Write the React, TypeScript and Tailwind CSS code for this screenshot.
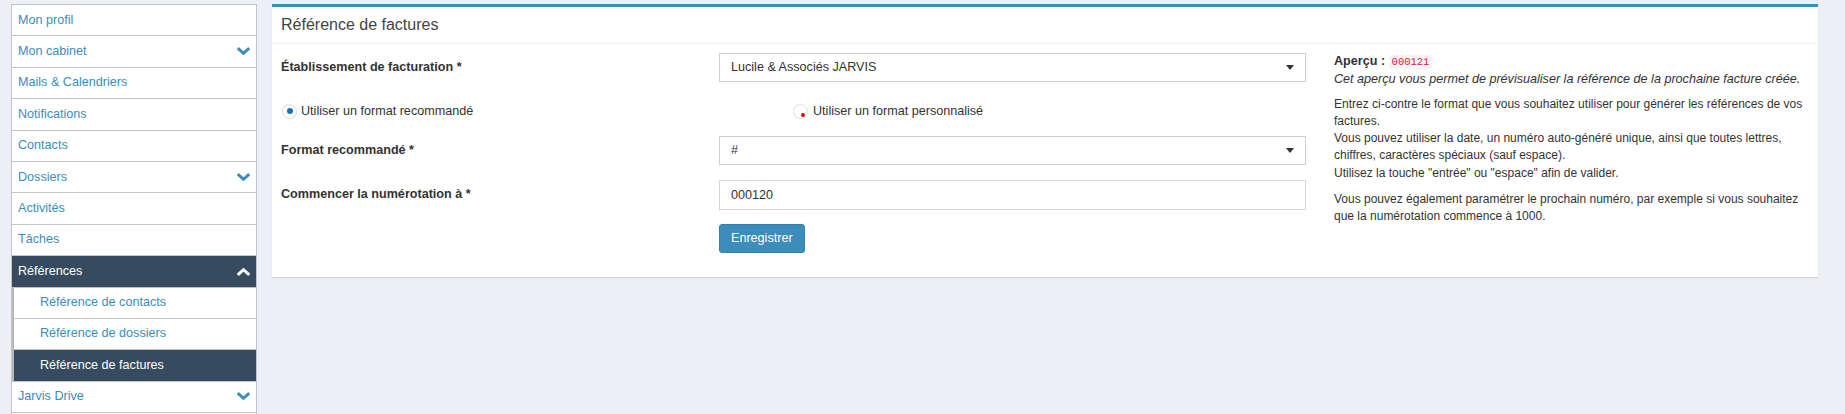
import { useState } from "react";

type NavItem = { label: string; chevron?: "down" | "up"; active?: boolean };

const topItems: NavItem[] = [
    { label: "Mon profil" },
    { label: "Mon cabinet", chevron: "down" },
    { label: "Mails & Calendriers" },
    { label: "Notifications" },
    { label: "Contacts" },
    { label: "Dossiers", chevron: "down" },
    { label: "Activités" },
    { label: "Tâches" },
];

const subItems = [
    { label: "Référence de contacts" },
    { label: "Référence de dossiers" },
    { label: "Référence de factures", active: true },
];

function Chevron({ dir, className }: { dir: "down" | "up"; className: string }) {
    return (
        <svg viewBox="0 0 14 9" className={className} fill="none" stroke="currentColor" strokeWidth="3.2" strokeLinecap="square">
            {dir === "down" ? <polyline points="2,2 7,6.5 12,2" /> : <polyline points="2,7 7,2.5 12,7" />}
        </svg>
    );
}

function Caret() {
    return (
        <svg viewBox="0 0 8 5" className="h-[5px] w-[8px] text-[#333]" fill="currentColor">
            <polygon points="0,0 8,0 4,5" />
        </svg>
    );
}

function Sidebar() {
    return (
        <aside className="w-[246px] shrink-0 self-start border-x border-t border-[#c3c3c3] bg-white">
            {topItems.map((item) => (
                <div key={item.label} className="flex h-[31.4px] items-center justify-between border-b border-[#c3c3c3] pl-[6px] pr-[6px] text-[#3c8dbc]">
                    <span>{item.label}</span>
                    {item.chevron && <Chevron dir={item.chevron} className="h-[9px] w-[13px]" />}
                </div>
            ))}
            <div className="flex h-[31.4px] items-center justify-between border-b border-[#c3c3c3] bg-[#364b60] pl-[6px] pr-[6px] text-white">
                <span>Références</span>
                <Chevron dir="up" className="h-[9px] w-[13px]" />
            </div>
            <div className="border-l-2 border-[#b8b8b8]">
                {subItems.map((item) => (
                    <div
                        key={item.label}
                        className={
                            item.active
                                ? "flex h-[31.4px] items-center border-b border-[#c3c3c3] bg-[#364b60] pl-[26px] text-white"
                                : "flex h-[31.4px] items-center border-b border-[#c3c3c3] pl-[26px] text-[#3c8dbc]"
                        }
                    >
                        {item.label}
                    </div>
                ))}
            </div>
            <div className="flex h-[31.4px] items-center justify-between border-b border-[#c3c3c3] pl-[6px] pr-[6px] text-[#3c8dbc]">
                <span>Jarvis Drive</span>
                <Chevron dir="down" className="h-[9px] w-[13px]" />
            </div>
            <div className="h-[31.4px] border-b border-[#c3c3c3]"></div>
        </aside>
    );
}

function FakeSelect({ value }: { value: string }) {
    return (
        <div className="flex h-[29px] w-[587px] items-center justify-between border border-[#cfcfcf] bg-white pl-[11px] pr-[11px] text-[#333]">
            <span>{value}</span>
            <Caret />
        </div>
    );
}

export default function App() {
    const [mode, setMode] = useState<"reco" | "perso">("reco");

    return (
        <div
            className="flex h-[414px] overflow-hidden gap-[15px] bg-[#ecf0f5] pl-[11px] pr-[27px] pt-[4px] text-[12.6px] leading-[17.3px] text-[#333]"
            style={{ fontFamily: '"Liberation Sans", Arial, sans-serif' }}
        >
            <Sidebar />

            <div className="flex-1 self-start border-t-[3px] border-[#3c8dbc] bg-white shadow-[0_1px_1px_rgba(0,0,0,0.12)]">
                <div className="flex h-[37px] items-center border-b border-[#f2f2f2] pl-[9px] text-[16px] text-[#444]">
                    Référence de factures
                </div>

                <div className="flex pb-[24px] pl-[9px] pr-[8px] pt-[9px]">
                    <div className="w-[1025px] shrink-0">
                        <div className="flex items-center">
                            <div className="w-[438px] font-bold">Établissement de facturation *</div>
                            <FakeSelect value="Lucile & Associés JARVIS" />
                        </div>

                        <div className="mt-[15px] flex h-[29px] items-center">
                            <button type="button" onClick={() => setMode("reco")} className="flex w-[512px] items-center pl-[1px]">
                                <span className="mr-[4px] flex h-[15px] w-[15px] items-center justify-center rounded-full border border-[#dcdcdc] bg-white">
                                    {mode === "reco" && <span className="h-[6px] w-[6px] rounded-full bg-[#1f6fb5]"></span>}
                                </span>
                                Utiliser un format recommandé
                            </button>
                            <button type="button" onClick={() => setMode("perso")} className="flex items-center">
                                <span className="relative mr-[5px] flex h-[15px] w-[15px] items-center justify-center rounded-full border border-[#e0e0e0] bg-white">
                                    <span className="absolute bottom-[1px] right-[2px] h-[4px] w-[4px] rounded-full bg-[#e00000]"></span>
                                </span>
                                Utiliser un format personnalisé
                            </button>
                        </div>

                        <div className="mt-[10px] flex items-center">
                            <div className="w-[438px] font-bold">Format recommandé *</div>
                            <FakeSelect value="#" />
                        </div>

                        <div className="mt-[15px] flex items-center">
                            <div className="w-[438px] font-bold">Commencer la numérotation à *</div>
                            <input
                                defaultValue="000120"
                                className="h-[30px] w-[587px] border border-[#d2d6de] bg-white pl-[11px] text-[#333] outline-none"
                            />
                        </div>

                        <div className="mt-[14px] pl-[438px]">
                            <button type="button" className="h-[29px] rounded-[3px] border border-[#367fa9] bg-[#3c8dbc] px-[11px] text-white">
                                Enregistrer
                            </button>
                        </div>
                    </div>

                    <div className="ml-[28px] flex-1 whitespace-nowrap">
                        <div className="mb-[7px]">
                            <div>
                                <span className="font-bold">Aperçu : </span>
                                <code
                                    className="rounded-[3px] bg-[#f9f2f4] px-[3px] py-[1px] text-[10.5px] text-[#c7254e]"
                                    style={{ fontFamily: '"Liberation Mono", "Courier New", monospace' }}
                                >
                                    000121
                                </code>
                            </div>
                            <div className="italic">Cet aperçu vous permet de prévisualiser la référence de la prochaine facture créée.</div>
                        </div>
                        <p className="mb-[9px] text-[12px]">
                            Entrez ci-contre le format que vous souhaitez utiliser pour générer les références de vos
                            <br />
                            factures.
                            <br />
                            Vous pouvez utiliser la date, un numéro auto-généré unique, ainsi que toutes lettres,
                            <br />
                            chiffres, caractères spéciaux (sauf espace).
                            <br />
                            Utilisez la touche "entrée" ou "espace" afin de valider.
                        </p>
                        <p className="text-[12px]">
                            Vous pouvez également paramétrer le prochain numéro, par exemple si vous souhaitez
                            <br />
                            que la numérotation commence à 1000.
                        </p>
                    </div>
                </div>
            </div>
        </div>
    );
}
